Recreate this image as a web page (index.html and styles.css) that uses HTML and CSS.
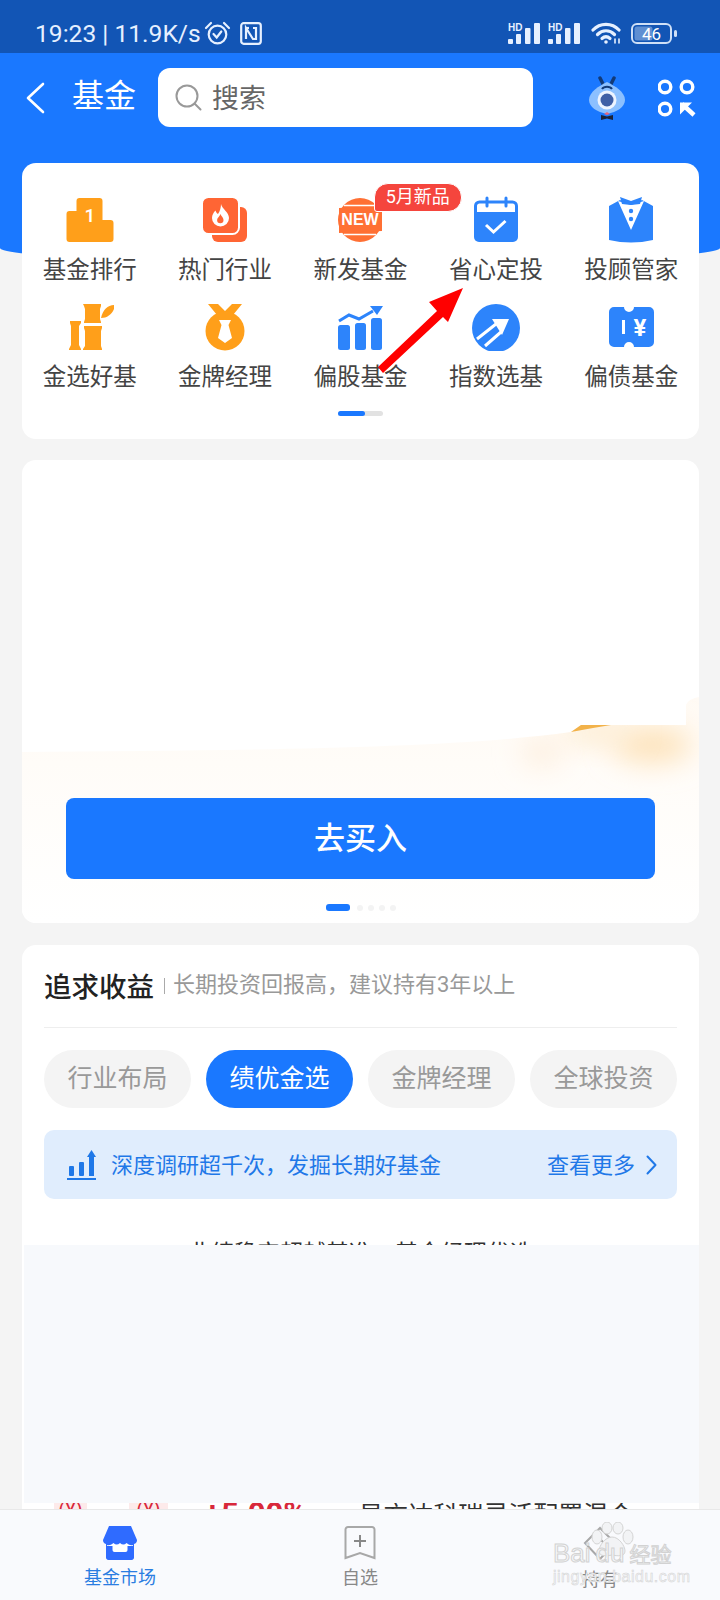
FILE: index.html
```html
<!DOCTYPE html>
<html lang="zh-CN">
<head>
  <meta charset="UTF-8">
  <meta name="viewport" content="width=device-width, initial-scale=1">
  <title>基金</title>
  <link rel="stylesheet" href="styles.css">
</head>
<body>
  <div class="page">
    <div class="scroll">
      <div class="hero">
        <div class="statusbar">
          <span class="status-text">19:23 | 11.9K/s</span>
          <svg class="st-alarm" width="27" height="24" viewBox="0 0 27 24" fill="none" stroke="#e6f0ff" stroke-width="2.2"><circle cx="13.5" cy="13.5" r="8.8"/><path d="M9.5 13l3.2 3.5 4.6-6" stroke-linecap="round"/><path d="M2 7l5-5M25 7l-5-5" stroke-linecap="round"/></svg>
          <svg class="st-nfc" width="22" height="23" viewBox="0 0 22 23" fill="none" stroke="#e6f0ff" stroke-width="2.2"><rect x="1.2" y="1.2" width="19.6" height="20.6" rx="2.5"/><path d="M6 17V6l7 11h3V6h-3"/><path d="M6 6h3"/></svg>
          <span class="status-gap"></span>
          <svg class="st-signal" width="33" height="21" viewBox="0 0 33 21" fill="#e6f0ff"><text x="0" y="8" class="st-hd">HD</text><rect x="0" y="16" width="5" height="5" rx="1"/><rect x="8" y="11" width="5" height="10" rx="1"/><rect x="17" y="5" width="5.500" height="16" rx="1"/><rect x="26" y="0" width="6" height="21" rx="1"/></svg>
          <svg class="st-signal" width="33" height="21" viewBox="0 0 33 21" fill="#e6f0ff"><text x="0" y="8" class="st-hd">HD</text><rect x="0" y="16" width="5" height="5" rx="1"/><rect x="8" y="11" width="5" height="10" rx="1"/><rect x="17" y="5" width="5.500" height="16" rx="1"/><rect x="26" y="0" width="6" height="21" rx="1"/></svg>
          <svg class="st-wifi" width="30" height="22" viewBox="0 0 30 22" fill="none" stroke="#e6f0ff" stroke-width="3.2" stroke-linecap="round"><path d="M2 8c7-7.500 19-7.500 26 0"/><path d="M6.500 12.500c5-5 12-5 17 0"/><path d="M11 16.500c2.500-2.200 5.500-2.200 8 0"/><circle cx="15" cy="20" r="1.800" fill="#e6f0ff" stroke="none"/><path d="M24 17v4M28 17v4" stroke-width="1.600"/></svg>
          <svg class="st-battery" width="46" height="21" viewBox="0 0 46 21"><rect x="1" y="1" width="39" height="19" rx="5" fill="none" stroke="#cfe0f7" stroke-width="2"/><rect x="3.500" y="3.500" width="18" height="14" rx="2.500" fill="#5f8fd2"/><rect x="43" y="7" width="3" height="7" rx="1.500" fill="#cfe0f7"/><text x="20.500" y="16.500" class="st-level">46</text></svg>
        </div>

        <div class="topbar">
          <svg class="back" width="20" height="32" viewBox="0 0 20 32" fill="none" stroke="#fff" stroke-width="2.600" stroke-linecap="round" stroke-linejoin="round"><path d="M18 2L3 16l15 14"/></svg>
          <span class="top-title">基金</span>
          <div class="search">
            <svg width="27" height="27" viewBox="0 0 27 27" fill="none" stroke="#999" stroke-width="2"><circle cx="12" cy="12" r="10.500"/><path d="M19.500 19.500l6 6" stroke-linecap="round"/></svg>
            <span>搜索</span>
          </div>
          <svg class="mascot" width="40" height="44" viewBox="0 0 40 44">
            <path d="M13 2l3 6M27 2l-3 6" stroke="#123a78" stroke-width="3.500" stroke-linecap="round"/>
            <path d="M20 6C28 10 38 16 38 24 38 31 30 36 20 38 10 36 2 31 2 24 2 16 12 10 20 6z" fill="#8cc0ff"/>
            <path d="M15 13c2-3 8-3 10 0" fill="none" stroke="#123a78" stroke-width="2"/>
            <circle cx="20" cy="24" r="9.500" fill="#eef4ff"/>
            <circle cx="20" cy="24" r="6.500" fill="#3f5fa6"/>
            <path d="M20 36l-3 2 3 1 3-1z" fill="#e8677a"/>
            <path d="M14 39l6 1.500 6-1.500v5l-6-1.500-6 1.500z" fill="#1a2238"/>
          </svg>
          <svg class="scan" width="38" height="38" viewBox="0 0 38 38" fill="none" stroke="#fff" stroke-width="3.400"><circle cx="7" cy="8" r="5.800"/><circle cx="29" cy="8" r="5.800"/><circle cx="7" cy="30" r="5.800"/><path d="M36 36L24 25" stroke-width="4.500"/><path d="M22 23.500h12L22 35.500z" fill="#fff" stroke="none"/></svg>
        </div>
      </div>

      <div class="card menu-card">
        <div class="menu-grid">
          <div class="menu-item">
            <svg class="menu-icon" viewBox="0 0 48 48"><path fill="#ff9f1a" d="M14.500 2h19a3 3 0 0 1 3 3v19h8a3 3 0 0 1 3 3v16a3 3 0 0 1-3 3h-41a3 3 0 0 1-3-3V18a3 3 0 0 1 3-3h7V5a3 3 0 0 1 3-3z"/><text x="24" y="26" class="icon-one">1</text></svg>
            <span>基金排行</span>
          </div>
          <div class="menu-item">
            <svg class="menu-icon" viewBox="0 0 48 48"><rect x="11" y="11" width="35" height="35" rx="6" fill="#ff6534"/><rect x="1" y="1" width="37" height="37" rx="6.500" fill="#ff6534" stroke="#fff" stroke-width="2"/><path fill="#fff" d="M20 8c1 5 8 8 8 14a8.500 8.500 0 0 1-17 0c0-3 1.500-5.500 3.500-7.500.5 2 1.500 3 2.500 3.500 2-3 3-6.500 3-10z"/><path fill="#ff6534" d="M19.500 18c.5 2 3 3.500 3 6a3.200 3.200 0 0 1-6.400 0c0-2 2.500-3.500 3.400-6z"/></svg>
            <span>热门行业</span>
          </div>
          <div class="menu-item">
            <svg class="menu-icon" viewBox="0 0 48 48"><circle cx="24" cy="24" r="22" fill="#ff7034"/><path d="M3 12L46 10V35L3 37z" fill="#ff7034"/><path d="M8 9.500h34M8 38.500h32" stroke="#fff" stroke-width="1.500"/><text x="24" y="29" class="icon-new">NEW</text></svg>
            <span>新发基金</span>
            <span class="badge">5月新品</span>
          </div>
          <div class="menu-item">
            <svg class="menu-icon" viewBox="0 0 48 48"><path fill="#2d84fb" d="M2 16h44v25a5 5 0 0 1-5 5H7a5 5 0 0 1-5-5z"/><path fill="none" stroke="#2d84fb" stroke-width="3" d="M3.500 16V10a4 4 0 0 1 4-4h33a4 4 0 0 1 4 4v6"/><path stroke="#2d84fb" stroke-width="3" stroke-linecap="round" d="M15 2v8M34 2v8"/><path fill="none" stroke="#fff" stroke-width="3" d="M14 29l7.500 7 12-11"/></svg>
            <span>省心定投</span>
          </div>
          <div class="menu-item">
            <svg class="menu-icon" viewBox="0 0 48 48"><path fill="#2d84fb" d="M2 10l11-6 11 4 11-4 11 6v34q-22 5-44 0z"/><path fill="#fff" d="M11 5l13 29L37 5l-13 4z"/><path fill="#2d84fb" d="M13 1l11 4 11-4-2 7-9 1-9-1z"/><circle cx="24" cy="15" r="2.200" fill="#2d84fb"/><circle cx="24" cy="23" r="2.200" fill="#2d84fb"/></svg>
            <span>投顾管家</span>
          </div>
          <div class="menu-item">
            <svg class="menu-icon" viewBox="0 0 48 48"><path fill="#ff9f1a" d="M17 1h18v2l-1 3v10l1 3v1H18v-1l1-3V6l-1-3z"/><path fill="#ff9f1a" d="M18 23h18v2l-1 3v15l1 3v1H17v-1l2-3V28l-1-3z"/><path fill="#ff9f1a" d="M4 18h11v2l-2 3v19l2 4v1H3v-1l2-4V23l-1-3z"/><path fill="#ff9f1a" d="M35 15c2-9 7-13 14-13-1 8-7 13-14 13z"/></svg>
            <span>金选好基</span>
          </div>
          <div class="menu-item">
            <svg class="menu-icon" viewBox="0 0 48 48"><path fill="#ff9f1a" d="M7 1h10l7 7 7-7h10l-9 11H16z"/><circle cx="24" cy="28" r="19.500" fill="#ff9f1a"/><path fill="#fff" d="M18 17h12l-2.500 5 3.500 13-7 5-7-5 3.500-13z"/></svg>
            <span>金牌经理</span>
          </div>
          <div class="menu-item">
            <svg class="menu-icon" viewBox="0 0 48 48"><rect x="2" y="22" width="12" height="25" rx="2.500" fill="#2d84fb"/><rect x="19" y="20" width="11" height="27" rx="2.500" fill="#2d84fb"/><rect x="35" y="15" width="11" height="32" rx="2.500" fill="#2d84fb"/><path fill="none" stroke="#2d84fb" stroke-width="3" d="M3 18l10-6 10 4 14-8"/><path fill="#2d84fb" d="M34 3h13l-6 9z"/></svg>
            <span>偏股基金</span>
          </div>
          <div class="menu-item">
            <svg class="menu-icon" viewBox="0 0 48 48"><circle cx="24" cy="25" r="24" fill="#2d84fb"/><path fill="#fff" d="M20 16h17l-7 16z"/><path stroke="#fff" stroke-width="3" d="M5 36l19-15M13 43l16-14"/></svg>
            <span>指数选基</span>
          </div>
          <div class="menu-item">
            <svg class="menu-icon" viewBox="0 0 48 48"><path fill="#2d84fb" d="M7 4h10a5 5 0 0 0 10 0h15a5 5 0 0 1 5 5v30a5 5 0 0 1-5 5H27a5 5 0 0 0-10 0H7a5 5 0 0 1-5-5V9a5 5 0 0 1 5-5z"/><rect x="15" y="17" width="3" height="14" fill="#fff"/><text x="33" y="33" class="icon-yen">¥</text></svg>
            <span>偏债基金</span>
          </div>
        </div>
        <div class="pager"><i></i></div>
      </div>

      <div class="card promo-card">
        <svg class="promo-bg" width="677" height="463" viewBox="0 0 677 463">
          <defs>
            <linearGradient id="cream" x1="0" y1="0" x2="0" y2="1">
              <stop offset="0" stop-color="#fffaf4"/>
              <stop offset="0.3" stop-color="#fffcf8"/>
              <stop offset="1" stop-color="#ffffff"/>
            </linearGradient>
            <clipPath id="wave"><path d="M0 292C200 290 420 290 549 272L559 265H664V245Q666 239 677 237V463H0z"/></clipPath>
            <filter id="soft" x="-100%" y="-100%" width="300%" height="300%"><feGaussianBlur stdDeviation="14"/></filter>
          </defs>
          <g clip-path="url(#wave)">
            <rect y="235" width="677" height="228" fill="url(#cream)"/>
            <ellipse cx="630" cy="285" rx="40" ry="18" fill="#fde3bb" filter="url(#soft)"/>
            <ellipse cx="575" cy="272" rx="36" ry="12" fill="#fdebcf" filter="url(#soft)"/>
            <ellipse cx="520" cy="292" rx="20" ry="14" fill="#fdeedd" filter="url(#soft)"/>
          </g>
          <path d="M549 272L559 265H589Q570 268 549 272z" fill="#f2b24a"/>
        </svg>
        <div class="buy-btn">去买入</div>
        <div class="dots"><i class="on"></i><i></i><i></i><i></i><i></i></div>
      </div>

      <div class="card fund-card">
        <div class="fund-head">
          <span class="fund-title">追求收益</span>
          <span class="fund-sep"></span>
          <span class="fund-sub">长期投资回报高，建议持有3年以上</span>
        </div>
        <div class="chips">
          <span class="chip">行业布局</span>
          <span class="chip active">绩优金选</span>
          <span class="chip">金牌经理</span>
          <span class="chip">全球投资</span>
        </div>
        <div class="notice">
          <svg width="29" height="30" viewBox="0 0 29 30" fill="#1f78e8"><rect x="2" y="16" width="5" height="10" rx="1"/><rect x="12" y="12" width="5" height="14" rx="1"/><rect x="22" y="7" width="5" height="19"/><path d="M24.500 0l4.500 7h-9z"/><rect y="28" width="29" height="2"/></svg>
          <span class="notice-text">深度调研超千次，发掘长期好基金</span>
          <span class="notice-more">查看更多</span>
          <svg width="11" height="20" viewBox="0 0 11 20" fill="none" stroke="#1f78e8" stroke-width="2" stroke-linecap="round" stroke-linejoin="round"><path d="M1.500 1.500L9.500 10l-8 8.500"/></svg>
        </div>
        <div class="fund-note">业绩稳定超越基准，基金经理优选</div>
        <div class="fund-row">
          <span class="fund-tag small">(¥)</span>
          <span class="fund-tag">(¥)</span>
          <span class="fund-rate">+5.00%</span>
          <span class="fund-name">易方达科瑞灵活配置混合</span>
        </div>
        <div class="fund-mask"></div>
      </div>
    </div>

    <div class="tabbar">
      <div class="tab active">
        <svg width="34" height="34" viewBox="0 0 34 34"><path fill="#2f6bff" d="M6 0h22l6 14q0 3-3 4v12a4 4 0 0 1-4 4H7a4 4 0 0 1-4-4V18q-3-1-3-4z"/><path fill="#fff" d="M4 19q3 1 6.500-2 3 3 6.500 0 3.500 3 6.500 0 3.500 3 6.500 2v1H4z"/><rect x="3" y="20" width="28" height="14" rx="3" fill="#2f6bff"/><path fill="#fff" d="M9.500 20h15v4a2 2 0 0 1-2 2h-11a2 2 0 0 1-2-2z"/></svg>
        <span>基金市场</span>
      </div>
      <div class="tab">
        <svg width="32" height="34" viewBox="0 0 32 34" fill="none" stroke="#a8a8a8" stroke-width="2"><path d="M4 1h24a2.500 2.500 0 0 1 2.500 2.500V32L16 27 1.500 32V3.500A2.500 2.500 0 0 1 4 1z"/><path d="M16 9v12M10 15h12" stroke="#888"/></svg>
        <span>自选</span>
      </div>
      <div class="tab">
        <svg width="36" height="36" viewBox="0 0 36 36" fill="none" stroke="#a8a8a8" stroke-width="2"><path d="M18 2l15 15-15 16L3 17z"/><path d="M18 13l5 5-5 5"/></svg>
        <span>持有</span>
      </div>
      <div class="watermark">
        <svg class="paw" width="50" height="36" viewBox="0 0 50 36" fill="#f2f3f5" stroke="#d4d4d4"><ellipse cx="12" cy="15" rx="5" ry="7"/><ellipse cx="22" cy="6" rx="5" ry="6"/><ellipse cx="33" cy="6" rx="5" ry="6"/><ellipse cx="43" cy="15" rx="5" ry="7"/><path d="M27 15c7 0 13 9 13 14 0 6-8 5-13 4-5 1-13 2-13-4 0-5 6-14 13-14z"/></svg>
        <div class="wm-main">Bai<span class="wm-du">du</span><span class="wm-cn">经验</span></div>
        <div class="wm-url">jingyan.baidu.com</div>
      </div>
    </div>

    <svg class="red-arrow" width="100" height="90" viewBox="0 0 100 90"><path fill="#f00" d="M6 83L65 27 57 18 91 4 76 38 71 33 11 89z"/></svg>
  </div>
</body>
</html>
```

FILE: styles.css
```css
:root {
  --blue: #1a78ff;
  --icon-blue: #2d84fb;
  --page: #f4f4f4;
  --cjk: "Noto Sans CJK SC", "Noto Sans", sans-serif;
}
* {
  box-sizing: border-box;
}
body {
  margin: 0;
  background: var(--page);
  font-family: Roboto, var(--cjk);
  color: #444;
}
.page {
  position: relative;
  width: 720px;
  height: 1600px;
  display: flex;
  flex-direction: column;
  overflow: hidden;
}
.scroll {
  flex: 1;
  min-height: 0;
  overflow: hidden;
}

/* top blue area */
.hero {
  height: 263px;
  background: var(--blue);
  border-radius: 0 0 50% 50% / 0 0 15px 15px;
}
.statusbar {
  height: 53px;
  padding: 0 43px 0 35px;
  background: #1255b5;
  display: flex;
  align-items: center;
  color: #e6f0ff;
}
.status-text {
  font-size: 24.6px;
  line-height: 30px;
  white-space: nowrap;
  margin-top: 15px;
}
.statusbar svg {
  margin-top: 13px;
  flex: none;
}
.st-alarm {
  margin-left: 3px;
}
.st-nfc {
  margin-left: 9px;
}
.status-gap {
  flex: 1;
}
.st-signal {
  margin-right: 7px;
}
.st-wifi {
  margin: 13px 10px 0 3px;
}
.st-hd {
  font: bold 10px "Liberation Sans", sans-serif;
}
.st-level {
  font: 17px Roboto, sans-serif;
  fill: #fff;
  text-anchor: middle;
}
.topbar {
  display: flex;
  align-items: center;
  padding: 15px 23px 0 25px;
}
.top-title {
  margin: 0 22px 0 27px;
  width: 64px;
  padding-bottom: 3px;
  font-size: 32px;
  line-height: 56px;
  color: #fff;
  white-space: nowrap;
}
.search {
  width: 375px;
  height: 59px;
  padding-left: 17px;
  display: flex;
  align-items: center;
  gap: 10px;
  background: #fff;
  border-radius: 12px;
  font-size: 27px;
  color: #666;
}
.search span {
  padding-bottom: 3px;
}
.mascot {
  margin-left: 54px;
}
.scan {
  margin-left: 31px;
}

/* cards */
.card {
  position: relative;
  margin: 0 21px 22px 22px;
  background: #fff;
  border-radius: 14px;
}
.menu-card {
  margin-top: -100px;
  margin-bottom: 21px;
  padding: 33px 0 23px;
}
.menu-grid {
  display: grid;
  grid-template-columns: repeat(5, 1fr);
  row-gap: 18px;
}
.menu-item {
  position: relative;
  display: flex;
  flex-direction: column;
  align-items: center;
  gap: 11px;
  font-size: 23.5px;
  line-height: 30px;
  white-space: nowrap;
}
.menu-icon {
  width: 48px;
  height: 48px;
  display: block;
}
.icon-one {
  font: 500 19px Roboto, sans-serif;
  fill: #fff;
  text-anchor: middle;
}
.icon-new {
  font: bold 16px "Liberation Sans", sans-serif;
  fill: #fff;
  text-anchor: middle;
}
.icon-yen {
  font: bold 24px Roboto, sans-serif;
  fill: #fff;
  text-anchor: middle;
}
.badge {
  position: absolute;
  left: 81px;
  top: -13px;
  width: 88px;
  height: 29px;
  border: 1px solid #fff;
  border-radius: 14px 14px 14px 3px;
  background: #f5453d;
  color: #fff;
  font-size: 18px;
  line-height: 26px;
  text-align: center;
}
.pager {
  width: 45px;
  height: 5px;
  margin: 19px auto 0;
  border-radius: 3px;
  background: #e2e2e2;
}
.pager i {
  display: block;
  width: 27px;
  height: 5px;
  border-radius: 3px;
  background: var(--blue);
}
.promo-card {
  height: 463px;
  padding: 338px 44px 0;
  overflow: hidden;
}
.promo-bg {
  position: absolute;
  left: 0;
  top: 0;
}
.buy-btn {
  position: relative;
  height: 81px;
  border-radius: 8px;
  background: var(--blue);
  color: #fff;
  font-size: 31px;
  font-weight: 500;
  line-height: 81px;
  text-align: center;
}
.dots {
  position: relative;
  display: flex;
  align-items: center;
  gap: 5px;
  margin: 25px 0 0 260px;
}
.dots i {
  width: 6px;
  height: 6px;
  border-radius: 50%;
  background: #f3f3f3;
}
.dots i.on {
  width: 24px;
  height: 7px;
  margin-right: 2px;
  border-radius: 3px;
  background: var(--blue);
}

/* fund list */
.fund-card {
  margin-bottom: 0;
  height: 700px;
  padding: 22px 22px 0;
}
.fund-head {
  height: 61px;
  padding-bottom: 22px;
  display: flex;
  align-items: center;
  border-bottom: 1px solid #eee;
}
.fund-title {
  font-size: 27.5px;
  font-weight: 500;
  color: #222;
  white-space: nowrap;
  margin-top: -3px;
}
.fund-sep {
  width: 1px;
  height: 16px;
  margin: 0 8px 0 10px;
  background: #aaa;
}
.fund-sub {
  font-size: 22px;
  color: #999;
  white-space: nowrap;
  margin-top: -9px;
}
.chips {
  display: flex;
  justify-content: space-between;
  margin-top: 22px;
}
.chip {
  width: 147px;
  height: 58px;
  border-radius: 29px;
  background: #f4f4f4;
  color: #999;
  font-size: 25px;
  line-height: 58px;
  text-align: center;
}
.chip.active {
  background: var(--blue);
  color: #fff;
}
.notice {
  height: 69px;
  margin-top: 22px;
  padding: 0 20px 0 23px;
  display: flex;
  align-items: center;
  border-radius: 10px;
  background: #e0edfd;
  color: #1f78e8;
  font-size: 22px;
}
.notice-text {
  flex: 1;
  margin-left: 15px;
  padding-bottom: 4px;
}
.notice-more {
  margin-right: 11px;
  padding-bottom: 4px;
}
.fund-note {
  margin-top: 40px;
  font-size: 23px;
  line-height: 30px;
  color: #333;
  text-align: center;
}
.fund-row {
  margin-top: 224px;
  display: flex;
  align-items: center;
  height: 40px;
  white-space: nowrap;
}
.fund-tag {
  width: 39px;
  height: 30px;
  margin: 0 0 0 4px;
  border-radius: 4px;
  background: #fdeaea;
  color: #d8283a;
  font-size: 20px;
  text-align: center;
}
.fund-tag.small {
  width: 33px;
  margin: 0 38px 0 10px;
}
.fund-rate {
  margin-left: 36px;
  font-size: 31px;
  font-weight: 700;
  color: #d8283a;
}
.fund-name {
  margin-left: 52px;
  font-size: 25px;
  color: #333;
}
.fund-mask {
  position: absolute;
  left: 2px;
  right: 0;
  top: 300px;
  height: 258px;
  background: #f7f9fc;
}

/* bottom tabs */
.tabbar {
  position: relative;
  flex: none;
  height: 91px;
  display: grid;
  grid-template-columns: repeat(3, 240px);
  background: #f9fafd;
  border-top: 1px solid #e8e8e8;
}
.tab {
  display: flex;
  flex-direction: column;
  align-items: center;
  padding-top: 16px;
  gap: 5px;
  font-size: 18px;
  line-height: 26px;
  color: #888;
}
.tab svg {
  flex: none;
}
.tab.active {
  color: #2a7de1;
}
.watermark {
  position: absolute;
  left: 553px;
  top: 12px;
  width: 130px;
  color: #f6f7f9;
  -webkit-text-stroke: 1px #d2d2d2;
}
.paw {
  position: absolute;
  left: 32px;
  top: 0;
}
.wm-main {
  position: relative;
  margin-top: 18px;
  font: 26px/27px "Liberation Sans", var(--cjk);
  white-space: nowrap;
}
.wm-du {
  margin: 0 5px 0 5px;
}
.wm-cn {
  font-size: 21px;
}
.wm-url {
  position: relative;
  font: 16px/17px "Liberation Sans", sans-serif;
  white-space: nowrap;
  -webkit-text-stroke: 0.5px #d2d2d2;
  letter-spacing: 0.5px;
}
.red-arrow {
  position: absolute;
  left: 372px;
  top: 284px;
}
```
